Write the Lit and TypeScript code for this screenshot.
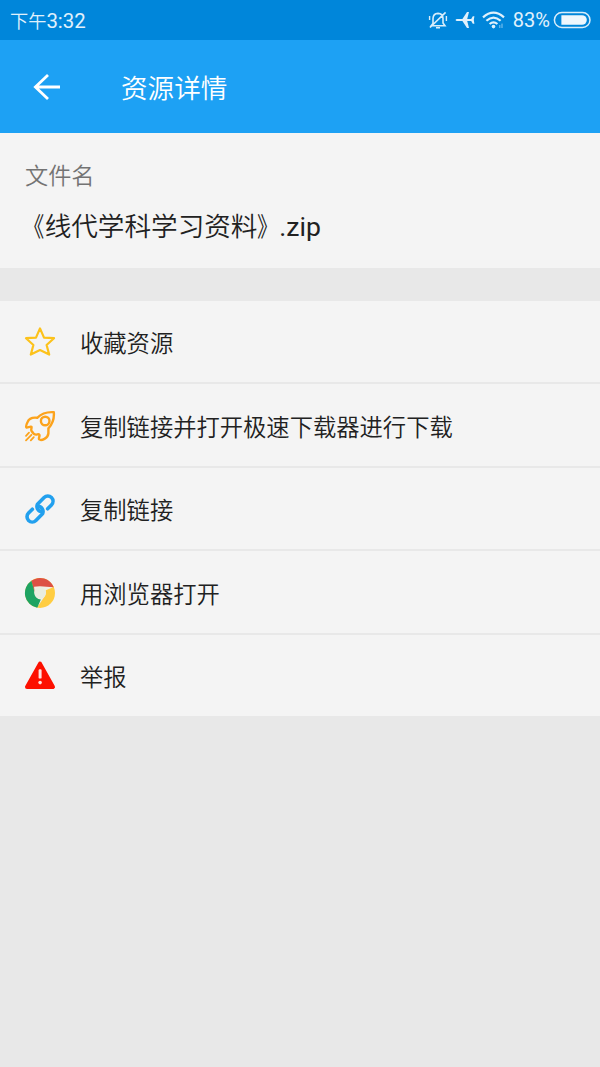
import { LitElement, html, svg, css } from "lit";
import { customElement } from "lit/decorators.js";

const star = svg`<path d="M16 2.4 L20 11.6 L30 12.2 L22.6 19 L25.2 28.6 L16 24 L6.8 28.6 L9.4 19 L2 12.2 L12 11.6 Z" fill="none" stroke="#fcc21b" stroke-width="2.2" stroke-linejoin="round"/>`;

const rocket = svg`<g fill="none" stroke="#fca31c" stroke-width="2.4" stroke-linecap="round" stroke-linejoin="round">
  <path d="M29.8 2.2 C23 1.8 17.5 3.4 13.2 7.8 C8.6 7.2 5 8.6 3.6 12 C2.2 14.8 1.8 16.6 2.4 17.4 C3.4 18 6.2 16 7.4 16.8 C8 17.6 6.8 19.4 7.4 20.6 C8.4 22.4 10 24.6 12 24.6 C13.4 24.6 14.6 23.6 15.4 24.8 C16 26.4 14.2 28.4 15.2 29.4 C17.4 31 24 28.4 24.4 23.4 L24.4 18.4 C28.8 13.6 30.4 8.4 29.8 2.2 Z"/>
  <circle cx="21.2" cy="11" r="4.3"/>
  <path d="M5 22.6 L2 25.8 M7.4 24.8 L2 30.4 M9.8 27.2 L6.8 30.4" stroke-width="1.8"/></g>`;

const link = svg`<g transform="rotate(-45 16 16)" fill="none" stroke="#22a0ee" stroke-width="3.6" stroke-linecap="round">
  <path d="M15.6 19.6 A5.4 5.4 0 0 1 17.6 10.8 H27 A5.2 5.2 0 0 1 27 21.2 H21.6"/>
  <path d="M16.4 12.4 A5.4 5.4 0 0 1 14.4 21.2 H5 A5.2 5.2 0 0 1 5 10.8 H10.4"/></g>`;

const chrome = svg`<circle cx="16" cy="16" r="15" fill="#ffcd42"/>
  <path d="M7.4 3.7 A15 15 0 0 1 29.8 10.2 L16 10 L11 17.5 Z" fill="#dd5044"/>
  <path d="M7.4 3.7 A15 15 0 0 0 13.2 30.8 L18.8 21 L11.2 17.2 Z" fill="#1ea362"/>
  <path d="M10 9.8 L16 9.2 L29.2 10.2 L21.8 13.2 Q22.6 18 19.4 21.2 L13.6 30 L16.8 22.6 Q11.6 21.6 10.8 16.4 Z" fill="#f1eee4"/>
  <circle cx="16" cy="15.8" r="5.8" fill="#e9eddf"/>`;

const warning = svg`<path d="M16 4.6 L29 28 H3 Z" fill="#fd1000" stroke="#fd1000" stroke-width="4" stroke-linejoin="round" transform="translate(0 -1)"/>
  <rect x="14.6" y="9.2" width="3" height="9.4" rx="1.2" fill="#ffe3df"/><circle cx="16.1" cy="22.6" r="1.8" fill="#ffe3df"/>`;

const actions = [
  { icon: star, label: "收藏资源" },
  { icon: rocket, label: "复制链接并打开极速下载器进行下载" },
  { icon: link, label: "复制链接" },
  { icon: chrome, label: "用浏览器打开" },
  { icon: warning, label: "举报" },
];

@customElement("app-root")
export class AppRoot extends LitElement {
  static styles = css`
    :host { display: flex; flex-direction: column; min-height: 100vh; background: #e8e8e8;
      font-family: Roboto, "Noto Sans CJK SC", sans-serif; color: #212121; font-weight: 350; }
    svg { display: block; flex: none; }
    .status { height: 40px; box-sizing: border-box; padding: 0 9px 0 10px; background: #0086da; color: #e0f1fc;
      display: flex; align-items: center; justify-content: space-between; font-size: 20px; line-height: 39px; }
    .time { font-size: 18.2px; margin-top: 3px; }
    .clock { font-size: 20.4px; font-weight: 400; }
    .tray { display: flex; align-items: center; }
    .plane, .wifi { margin-left: 7px; }
    .percent { margin: 1px 3px 0 8px; font-weight: 400; }
    .bar { height: 93px; background: #1da1f4; color: #fff; display: flex; align-items: center; padding-left: 32px; }
    .title { font-size: 26.6px; line-height: 40px; margin: 4px 0 0 60px; font-weight: 350; }
    .file { height: 135px; box-sizing: border-box; background: #f4f4f4; padding: 25px 25px 0; margin-bottom: 33px; }
    .caption { font-size: 23.2px; line-height: 36px; color: #737373; }
    .name { font-size: 26.6px; line-height: 40px; margin-top: 13px; white-space: nowrap; }
    .open, .close { display: inline-block; font-feature-settings: "halt"; }
    .open { margin-left: 6.4px; transform: scaleX(.8); transform-origin: right; }
    .close { margin-right: 8.6px; transform: scaleX(.8); transform-origin: left; }
    .ext { font-weight: 400; }
    .list { background: #f4f4f4; }
    .row { height: 83.4px; box-sizing: border-box; padding: 1.4px 0 0 24px; display: flex; align-items: center; gap: 24px;
      font-size: 23.3px; border-bottom: 2px solid #e8e8e8; }
    .row:first-child { padding-top: 1px; }
    .row:last-child { border-bottom: 0; height: 81.6px; }
  `;

  render() {
    return html`
      <div class="status">
        <span class="time">下午<span class="clock">3:32</span></span>
        <div class="tray">
          <svg width="20" height="20" viewBox="0 0 20 20" fill="none" stroke="#d8edfa" stroke-width="1.6">
            <path d="M5 15 V8.5 Q5.2 3.6 10 3.4 Q14.8 3.6 15 8.5 V13 L17 15.8 H3.2 L5 13.4 M8 17.8 H12 M2 17.5 L17.6 2.4"/>
            <path d="M1.6 6 V10 M18.4 6 V11" stroke-width="1.4"/>
          </svg>
          <svg class="plane" width="20" height="18" viewBox="0 0 20 18" fill="#e0f1fc">
            <path d="M19.4 5.2 H17.8 L16.2 8 H12.2 L14 1 H12 L7.4 8 H2.2 Q.6 8.2 .6 9 Q.6 9.8 2.2 10 H7.4 L12 17 H14 L12.2 10 H16.2 L17.8 12.8 H19.4 L18.8 9 Z"/>
          </svg>
          <svg class="wifi" width="23" height="18" viewBox="0 0 23 18" fill="none" stroke="#e0f1fc" stroke-width="2.2">
            <path d="M1 6.4 Q11.5 -3 22 6.4 M4.4 9.8 Q11.5 3.4 18.6 9.8 M7.6 13 Q11.5 9.6 15.4 13"/>
            <circle cx="11.5" cy="15.6" r="1.8" fill="#e0f1fc" stroke="none"/>
            <path d="M17.8 14 V17 M20 12.6 V17" stroke-width="1" opacity=".6"/>
          </svg>
          <span class="percent">83%</span>
          <svg width="38" height="18" viewBox="0 0 38 18">
            <rect x="1.4" y="1.5" width="35.6" height="15" rx="7.5" fill="none" stroke="#d8edfa" stroke-width="1.5"/>
            <path d="M8.4 4.2 H29 A4.8 4.8 0 0 1 29 13.8 H8.4 Z" fill="#eef7fd"/>
          </svg>
        </div>
      </div>
      <div class="bar">
        <svg width="29" height="28" viewBox="0 0 29 28" fill="none" stroke="#fff" stroke-width="2.8">
          <path d="M16 2 L3.4 14 L16 26 M3.4 14 H28"/>
        </svg>
        <h1 class="title">资源详情</h1>
      </div>
      <div class="file">
        <div class="caption">文件名</div>
        <div class="name"><span class="open">《</span>线代学科学习资料<span class="close">》</span><span class="ext">.zip</span></div>
      </div>
      <div class="list">
        ${actions.map((a) => html`<div class="row">
          <svg width="32" height="32" viewBox="0 0 32 32">${a.icon}</svg>
          <span>${a.label}</span>
        </div>`)}
      </div>
    `;
  }
}
